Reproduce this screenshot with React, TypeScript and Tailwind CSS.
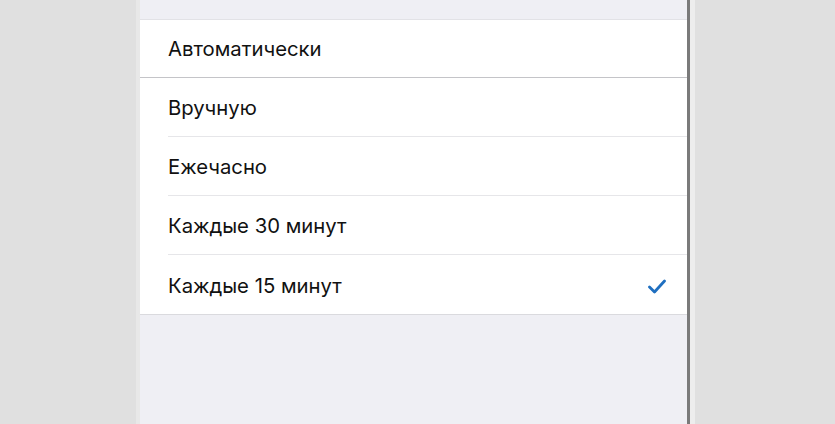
import React from 'react'

const options = ['Вручную', 'Ежечасно', 'Каждые 30 минут', 'Каждые 15 минут']
const selected = 'Каждые 15 минут'

function CheckMark() {
  return (
    <svg width="18" height="15" viewBox="0 0 18 15" fill="none">
      <path d="M1.5 8 L6.5 13 L16.5 2" stroke="#1f6fc0" strokeWidth="2.8" strokeLinecap="round" strokeLinejoin="round" />
    </svg>
  )
}

export default function App() {
  return (
    <div
      className="flex h-[424px] w-[835px] overflow-hidden"
      style={{ fontFamily: 'Inter, "Noto Sans", sans-serif' }}
    >
      <div className="w-[136px] bg-[#e0e0e0]" />
      <div className="w-[4px] bg-[#e8e8e8]" />

      {/* phone screen */}
      <div className="flex w-[547px] flex-col bg-[#efeff4] pt-[19px]">
        <div className="border-y border-t-[#e2e2e6] border-b-[#c4c4c8] bg-white">
          <div className="flex h-[57px] items-center pl-[28px] pt-[2px] text-[20.3px] text-[#111]">
            Автоматически
          </div>
        </div>

        <div className="border-b border-[#dadade] bg-white">
          {options.map((opt, i) => (
            <div key={opt} className="pl-[28px]">
              <div
                className={`flex h-[59px] items-center justify-between pr-[21px] pt-[3px] text-[20.3px] text-[#111] ${
                  i < options.length - 1 ? 'border-b border-[#e6e6e9]' : ''
                }`}
              >
                <span>{opt}</span>
                {opt === selected && <CheckMark />}
              </div>
            </div>
          ))}
        </div>
      </div>

      {/* bezel edge */}
      <div className="w-[3px] bg-[#7a7a7a]" />
      <div className="w-[5px] bg-[#ededed]" />
      <div className="flex-1 bg-[#e0e0e0]" />
    </div>
  )
}
